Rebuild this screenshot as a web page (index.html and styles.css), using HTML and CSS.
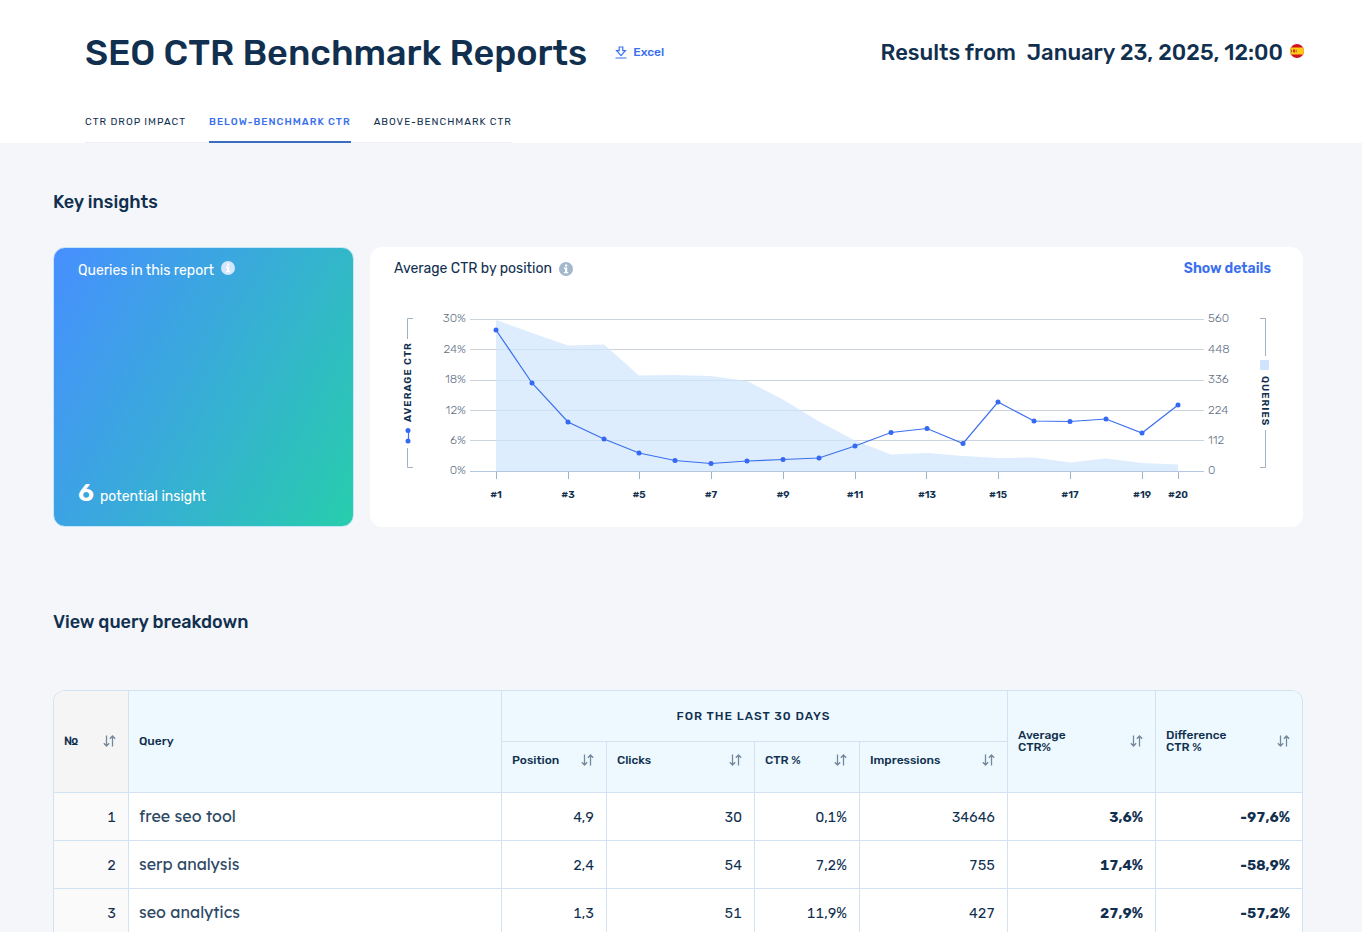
FILE: index.html
```html
<!DOCTYPE html>
<html lang="en">
<head>
<meta charset="utf-8">
<meta name="viewport" content="width=device-width, initial-scale=1">
<title>SEO CTR Benchmark Reports</title>
<link rel="stylesheet" href="styles.css">
</head>
<body>
<svg class="sprite" aria-hidden="true">
  <symbol id="sort" viewBox="0 0 13 12">
    <path d="M3.500 .5V11M.8 8.300L3.500 11L6.200 8.300M9.500 11.500V1M6.800 3.700L9.500 1L12.200 3.700" fill="none" stroke="currentColor" stroke-width="1.300"/>
  </symbol>
  <symbol id="info" viewBox="0 0 14 14">
    <circle cx="7" cy="7" r="7" fill="currentColor"/>
    <path class="info-mark" d="M6 2.500h2.200v1.900H6zM5 5.600h3.200v4.300h1v1.300H5V9.900h1V6.900H5z"/>
  </symbol>
</svg>
<header class="header">
  <div class="title-row">
    <h1 class="title">SEO CTR Benchmark Reports</h1>
    <button class="excel" type="button">
      <svg width="12" height="13" viewBox="0 0 12 13" fill="none" stroke="currentColor" stroke-width="1.200"><path d="M4.200 1h3.600v3.600H10.400L6 9.600L1.600 4.600H4.200zM.5 12h11"/></svg>
      Excel
    </button>
    <p class="results"><span>Results from</span><time datetime="2025-01-23T12:00">January 23, 2025, 12:00</time>
      <svg class="flag" width="14" height="14" viewBox="0 0 14 14" role="img" aria-label="Spain"><clipPath id="round"><circle cx="7" cy="7" r="7"/></clipPath><g clip-path="url(#round)"><path fill="#d0121f" d="M0 0h14v14H0z"/><path fill="#ffc914" d="M0 3.500h14v7H0z"/><path fill="#c33b22" d="M3 5.500h2.200v2.500L4.100 8.800L3 8z"/><path fill="#7c5a2b" d="M1.200 5.800h.8v2.500h-.8zM5.900 5.800h.7v2.500h-.7z"/></g></svg>
    </p>
  </div>
  <nav class="tabs">
    <a class="tab" href="#">CTR DROP IMPACT</a>
    <a class="tab active" href="#" aria-current="page">BELOW-BENCHMARK CTR</a>
    <a class="tab" href="#">ABOVE-BENCHMARK CTR</a>
  </nav>
</header>
<main class="main">
  <h2 class="section-title">Key insights</h2>
  <div class="cards">
    <section class="card insight">
      <h3 class="card-title">Queries in this report <svg class="info" width="14" height="14"><use href="#info"/></svg></h3>
      <p class="potential"><strong class="count">6</strong> potential insight</p>
    </section>
    <section class="card chart-card">
      <div class="card-head">
        <h3 class="card-title">Average CTR by position <svg class="info" width="14" height="14"><use href="#info"/></svg></h3>
        <a class="details" href="#">Show details</a>
      </div>
      <svg class="chart" viewBox="0 0 933 230" role="img" aria-label="Average CTR by position">
        <path class="grid" d="M100 22.500H834M100 52.500H834M100 83.500H834M100 113.500H834M100 143.500H834"/>
        <path class="area" d="M126 23L162 36L198 48.500L234 47.500L269 78.500L305 78L341 79L377 84L413 102.500L449 124.500L485 143.500L521 157.500L557 156L593 159L628 161L664 160.500L700 165.500L736 161.500L772 166L808 167.500V174H126z"/>
        <path class="axis" d="M100 174.500H834"/>
        <path class="tick" d="M126.500 175v7M198.500 175v7M269.500 175v7M341.500 175v7M413.500 175v7M485.500 175v7M556.500 175v7M628.500 175v7M700.500 175v7M772.500 175v7M808.500 175v7"/>
        <path class="line" d="M126 33L162 86L198 125L234 142L269 156L305 163.500L341 166.500L377 164L413 162.500L449 161L485 149L521 135.500L557 131.500L593 146.500L628 105L664 124L700 124.500L736 122L772 136L808 108"/>
        <g class="dots"><circle cx="126" cy="33" r="2.500"/><circle cx="162" cy="86" r="2.500"/><circle cx="198" cy="125" r="2.500"/><circle cx="234" cy="142" r="2.500"/><circle cx="269" cy="156" r="2.500"/><circle cx="305" cy="163.500" r="2.500"/><circle cx="341" cy="166.500" r="2.500"/><circle cx="377" cy="164" r="2.500"/><circle cx="413" cy="162.500" r="2.500"/><circle cx="449" cy="161" r="2.500"/><circle cx="485" cy="149" r="2.500"/><circle cx="521" cy="135.500" r="2.500"/><circle cx="557" cy="131.500" r="2.500"/><circle cx="593" cy="146.500" r="2.500"/><circle cx="628" cy="105" r="2.500"/><circle cx="664" cy="124" r="2.500"/><circle cx="700" cy="124.500" r="2.500"/><circle cx="736" cy="122" r="2.500"/><circle cx="772" cy="136" r="2.500"/><circle cx="808" cy="108" r="2.500"/></g>
        <g class="scale left"><text x="96" y="25">30%</text><text x="96" y="56">24%</text><text x="96" y="86">18%</text><text x="96" y="117">12%</text><text x="96" y="147">6%</text><text x="96" y="177">0%</text></g>
        <g class="scale"><text x="838" y="25">560</text><text x="838" y="56">448</text><text x="838" y="86">336</text><text x="838" y="117">224</text><text x="838" y="147">112</text><text x="838" y="177">0</text></g>
        <g class="positions"><text x="126" y="201">#1</text><text x="198" y="201">#3</text><text x="269" y="201">#5</text><text x="341" y="201">#7</text><text x="413" y="201">#9</text><text x="485" y="201">#11</text><text x="557" y="201">#13</text><text x="628" y="201">#15</text><text x="700" y="201">#17</text><text x="772" y="201">#19</text><text x="808" y="201">#20</text></g>
        <path class="tick" d="M43 21.500H37.500V42M37.500 151V170.500H43M890 21.500H895.500V59M895.500 133V170.500H890"/>
        <path class="line" d="M38.500 133V144"/>
        <g class="dots"><circle cx="38" cy="133.500" r="2.500"/><circle cx="38" cy="144" r="2.500"/></g>
        <rect class="swatch" x="890" y="63" width="9" height="10" rx="1"/>
        <text class="axis-name" transform="translate(41 125) rotate(-90)">AVERAGE CTR</text>
        <text class="axis-name" transform="translate(892 79) rotate(90)">QUERIES</text>
      </svg>
    </section>
  </div>
  <h2 class="section-title breakdown">View query breakdown</h2>
  <div class="table-wrap">
    <table class="table">
      <colgroup><col class="c-num"><col><col class="c-narrow"><col class="c-wide"><col class="c-narrow"><col class="c-wide"><col class="c-wide"><col class="c-last"></colgroup>
      <thead>
        <tr>
          <th class="num" rowspan="2"><span class="th">№ <button class="sort" type="button" aria-label="Sort by number"><svg width="13" height="12"><use href="#sort"/></svg></button></span></th>
          <th rowspan="2"><span class="th">Query</span></th>
          <th class="group" colspan="4">FOR THE LAST 30 DAYS</th>
          <th rowspan="2"><span class="th"><span>Average<br>CTR%</span> <button class="sort" type="button" aria-label="Sort by average CTR"><svg width="13" height="12"><use href="#sort"/></svg></button></span></th>
          <th rowspan="2"><span class="th"><span>Difference<br>CTR %</span> <button class="sort" type="button" aria-label="Sort by difference"><svg width="13" height="12"><use href="#sort"/></svg></button></span></th>
        </tr>
        <tr>
          <th class="sub"><span class="th">Position <button class="sort" type="button" aria-label="Sort by position"><svg width="13" height="12"><use href="#sort"/></svg></button></span></th>
          <th class="sub"><span class="th">Clicks <button class="sort" type="button" aria-label="Sort by clicks"><svg width="13" height="12"><use href="#sort"/></svg></button></span></th>
          <th class="sub"><span class="th">CTR % <button class="sort" type="button" aria-label="Sort by CTR"><svg width="13" height="12"><use href="#sort"/></svg></button></span></th>
          <th class="sub"><span class="th">Impressions <button class="sort" type="button" aria-label="Sort by impressions"><svg width="13" height="12"><use href="#sort"/></svg></button></span></th>
        </tr>
      </thead>
      <tbody>
        <tr><td class="num">1</td><td class="query">free seo tool</td><td>4,9</td><td>30</td><td>0,1%</td><td>34646</td><td class="strong">3,6%</td><td class="strong">-97,6%</td></tr>
        <tr><td class="num">2</td><td class="query">serp analysis</td><td>2,4</td><td>54</td><td>7,2%</td><td>755</td><td class="strong">17,4%</td><td class="strong">-58,9%</td></tr>
        <tr><td class="num">3</td><td class="query">seo analytics</td><td>1,3</td><td>51</td><td>11,9%</td><td>427</td><td class="strong">27,9%</td><td class="strong">-57,2%</td></tr>
      </tbody>
    </table>
  </div>
</main>
</body>
</html>
```
FILE: styles.css
```css
* { box-sizing: border-box; }
body {
  margin: 0;
  background: #f4f6fa;
  color: #11304f;
  font-family: Rubik, Roboto, sans-serif;
}
h1, h2, h3, p { margin: 0; }
button { border: 0; padding: 0; background: none; font: inherit; color: inherit; cursor: pointer; }
a { text-decoration: none; color: inherit; }
svg { flex: none; }
.sprite { display: none; }

.header { background: #fff; padding: 28px 58px 0 85px; }
.title-row { display: flex; align-items: center; height: 48px; }
.title { padding-top: 2px; font-size: 36px; line-height: 48px; font-weight: 500; white-space: nowrap; }
.excel { display: flex; align-items: center; gap: 6px; margin-left: 28px; color: #3a70ee; font-size: 12px; font-weight: 500; }
.results { display: flex; align-items: center; margin-left: auto; font-size: 22px; font-weight: 500; white-space: nowrap; }
.results time { margin-left: 11px; }
.flag { margin: 0 0 2px 7px; }
.tabs { display: inline-flex; gap: 23px; margin-top: 35px; height: 32px; border-bottom: 1px solid #eceff3; vertical-align: top; }
.tab { height: 32px; font-size: 10px; line-height: 22px; letter-spacing: 1px; white-space: nowrap; }
.tab.active { color: #3a70ee; font-weight: 500; border-bottom: 2px solid #3b6cc4; }

.main { padding: 46px 59px 0 53px; }
.section-title { font-size: 18px; line-height: 26px; font-weight: 500; }
.cards { display: flex; gap: 16px; margin-top: 32px; }
.card { border-radius: 12px; }
.card-title { display: flex; align-items: center; gap: 7px; font-size: 14px; line-height: 20px; font-weight: 400; }
.insight {
  flex: 0 0 301px;
  display: flex;
  flex-direction: column;
  justify-content: space-between;
  padding: 13px 24px 15px;
  border: 1px solid #c4e6fa;
  color: #fff;
  background: linear-gradient(118deg, #478fff 0%, #39aadb 45%, #27cdac 100%);
}
.insight .info { color: #d3e7fc; margin-bottom: 6px; }
.info-mark { fill: #fff; }
.insight .info-mark { fill: #3f9fe8; }
.potential { display: flex; align-items: baseline; gap: 6px; font-size: 14px; line-height: 28px; }
.count { font-size: 25px; font-weight: 600; }
.chart-card { flex: 1; min-width: 0; background: #fff; padding-top: 12px; }
.card-head { display: flex; justify-content: space-between; padding: 0 32px 0 24px; }
.chart-card .info { color: #a3b8cc; }
.details { color: #3a70ee; font-size: 14px; line-height: 20px; font-weight: 600; }
.chart { display: block; width: 100%; margin-top: 18px; }
.grid, .axis, .tick, .line { fill: none; stroke-width: 1; }
.grid { stroke: #ccd5dd; }
.axis { stroke: #b5c7de; }
.tick { stroke: #9fb1c2; }
.line { stroke: #3b70ee; stroke-width: 1.2px; }
.dots { fill: #3569f3; }
.area { fill: #cfe5fd; fill-opacity: .7; }
.swatch { fill: #cfe4fc; }
.scale { fill: #5f7186; font-size: 12px; font-weight: 300; }
.left { text-anchor: end; }
.positions { font-size: 10px; font-weight: 600; text-anchor: middle; fill: #11304f; }
.axis-name { font-size: 10px; font-weight: 600; letter-spacing: 1px; fill: #11304f; }

.breakdown { margin-top: 82px; }
.table-wrap { margin-top: 55px; border: 1px solid #d3e2f0; border-bottom: 0; border-radius: 12px 12px 0 0; overflow: hidden; background: #fff; }
.table { width: 100%; border-collapse: separate; border-spacing: 0; table-layout: fixed; }
.c-num { width: 75px; }
.c-narrow { width: 105px; }
.c-wide { width: 148px; }
.c-last { width: 146px; }
th, td { border: 0 solid #d3e2f0; border-width: 0 1px 1px 0; }
th:last-child, td:last-child { border-right-width: 0; }
th.sub:last-child { border-right-width: 1px; }
th { height: 51px; padding: 0 12px 2px 10px; background: #edf9fe; font-size: 12px; line-height: 12px; font-weight: 500; text-align: left; }
th.num { background: #f5f5f6; }
th.group { padding: 0 2px 0 0; text-align: center; letter-spacing: 1px; }
th.sub { vertical-align: top; padding-top: 12px; }
.th { display: flex; align-items: center; justify-content: space-between; }
.sort { display: flex; color: #74889b; }
td { height: 48px; padding: 2px 12px 0; font-size: 14px; font-variant-numeric: tabular-nums; text-align: right; }
td.num { background: #fafafb; }
td.query { padding: 0 10px 2px; font-family: Lexend, Lato, sans-serif; font-size: 16px; font-weight: 400; color: #2f4a65; text-align: left; }
.strong { font-weight: 700; }
```
